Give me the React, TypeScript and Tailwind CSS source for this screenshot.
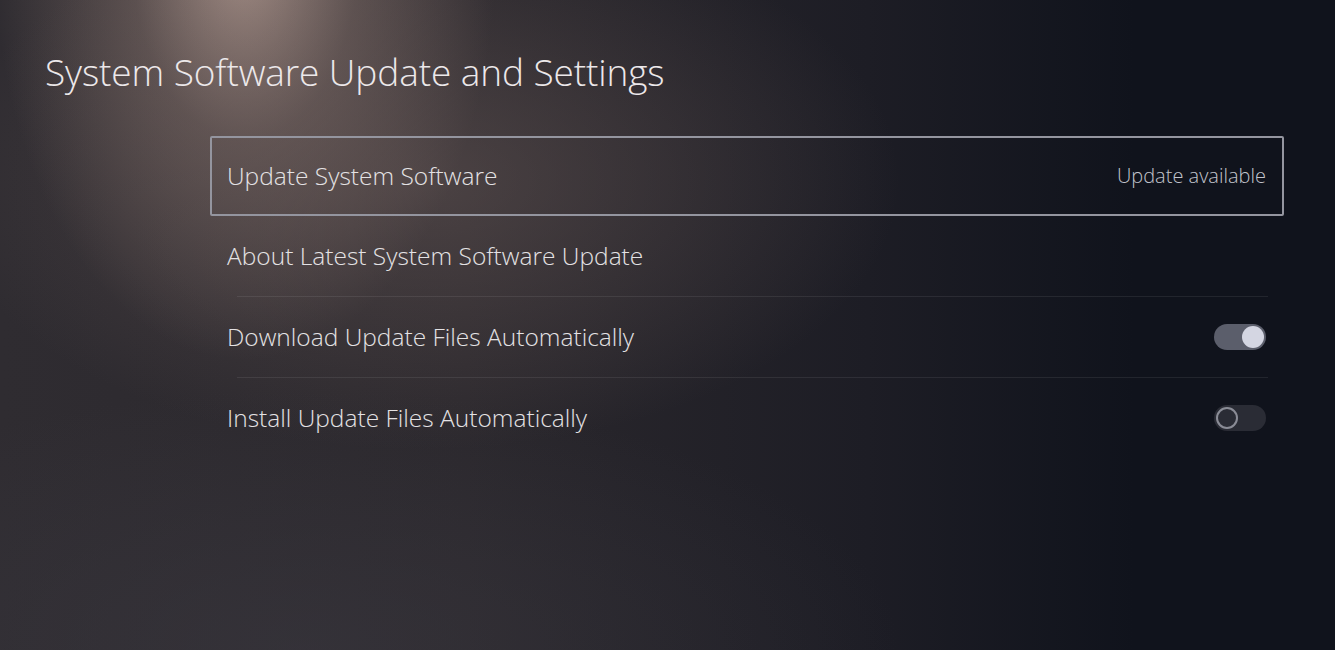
import React from "react";

interface Row {
  label: string;
  value?: string;
  toggle?: boolean;
  focused?: boolean;
}

const rows: Row[] = [
  { label: "Update System Software", value: "Update available", focused: true },
  { label: "About Latest System Software Update" },
  { label: "Download Update Files Automatically", toggle: true },
  { label: "Install Update Files Automatically", toggle: false },
];

function Toggle({ on }: { on: boolean }) {
  if (on) {
    return (
      <div className="flex h-[26px] w-[52px] items-center justify-end rounded-full bg-[#5b5e6b] px-[2px]">
        <div className="h-[22px] w-[22px] rounded-full bg-[#d4d6e2]" />
      </div>
    );
  }
  return (
    <div className="flex h-[26px] w-[52px] items-center justify-start rounded-full bg-[#2a2c35] px-[2px]">
      <div className="h-[22px] w-[22px] rounded-full border-2 border-[#8a8c96] bg-[#2a2c35]" />
    </div>
  );
}

export default function App() {
  return (
    <div
      className="relative h-[650px] w-[1335px] overflow-hidden bg-[#10131c] text-[#e6e4e6]"
      style={{ fontFamily: '"Open Sans", "Noto Sans", sans-serif' }}
    >
      <div className="pointer-events-none absolute inset-0 bg-[linear-gradient(90deg,#2f2c31_0%,#2b282d_35%,#1d1d25_65%,#10131c_85%)]" />
      <div className="pointer-events-none absolute inset-0 bg-[radial-gradient(ellipse_250px_400px_at_245px_-40px,rgba(185,160,150,0.85)_0%,rgba(135,116,110,0.5)_45%,rgba(60,52,56,0)_100%)]" />
      <div className="pointer-events-none absolute inset-0 bg-[radial-gradient(ellipse_480px_270px_at_420px_180px,rgba(115,98,95,0.45)_0%,rgba(60,52,56,0)_100%)]" />
      <div className="pointer-events-none absolute inset-0 bg-[radial-gradient(ellipse_600px_260px_at_300px_650px,rgba(60,58,66,0.5)_0%,rgba(40,40,48,0)_100%)]" />

      <div className="relative">
        <h1 className="pl-[45px] pt-[47px] text-[37px] font-light leading-[50px] tracking-[-0.1px] text-[#ece8ea]">
          System Software Update and Settings
        </h1>

        <div className="ml-[210px] mt-[39px] w-[1074px]">
          {rows.map((r, i) => (
            <div key={r.label}>
              {i > 1 && <div className="ml-[27px] mr-[16px] h-px bg-[#ffffff14]" />}
              <div
                className={
                  r.focused
                    ? "flex h-[80px] items-center justify-between rounded-[2px] border-2 border-[#94959f] pl-[15px] pr-[16px]"
                    : "flex h-[80px] items-center justify-between pl-[17px] pr-[18px]"
                }
              >
                <span className="text-[24.5px] font-light text-[#e4e2e4]">{r.label}</span>
                {r.value && (
                  <span className="text-[20px] font-light text-[#c2c4cc]">{r.value}</span>
                )}
                {r.toggle !== undefined && <Toggle on={r.toggle} />}
              </div>
            </div>
          ))}
        </div>
      </div>
    </div>
  );
}
